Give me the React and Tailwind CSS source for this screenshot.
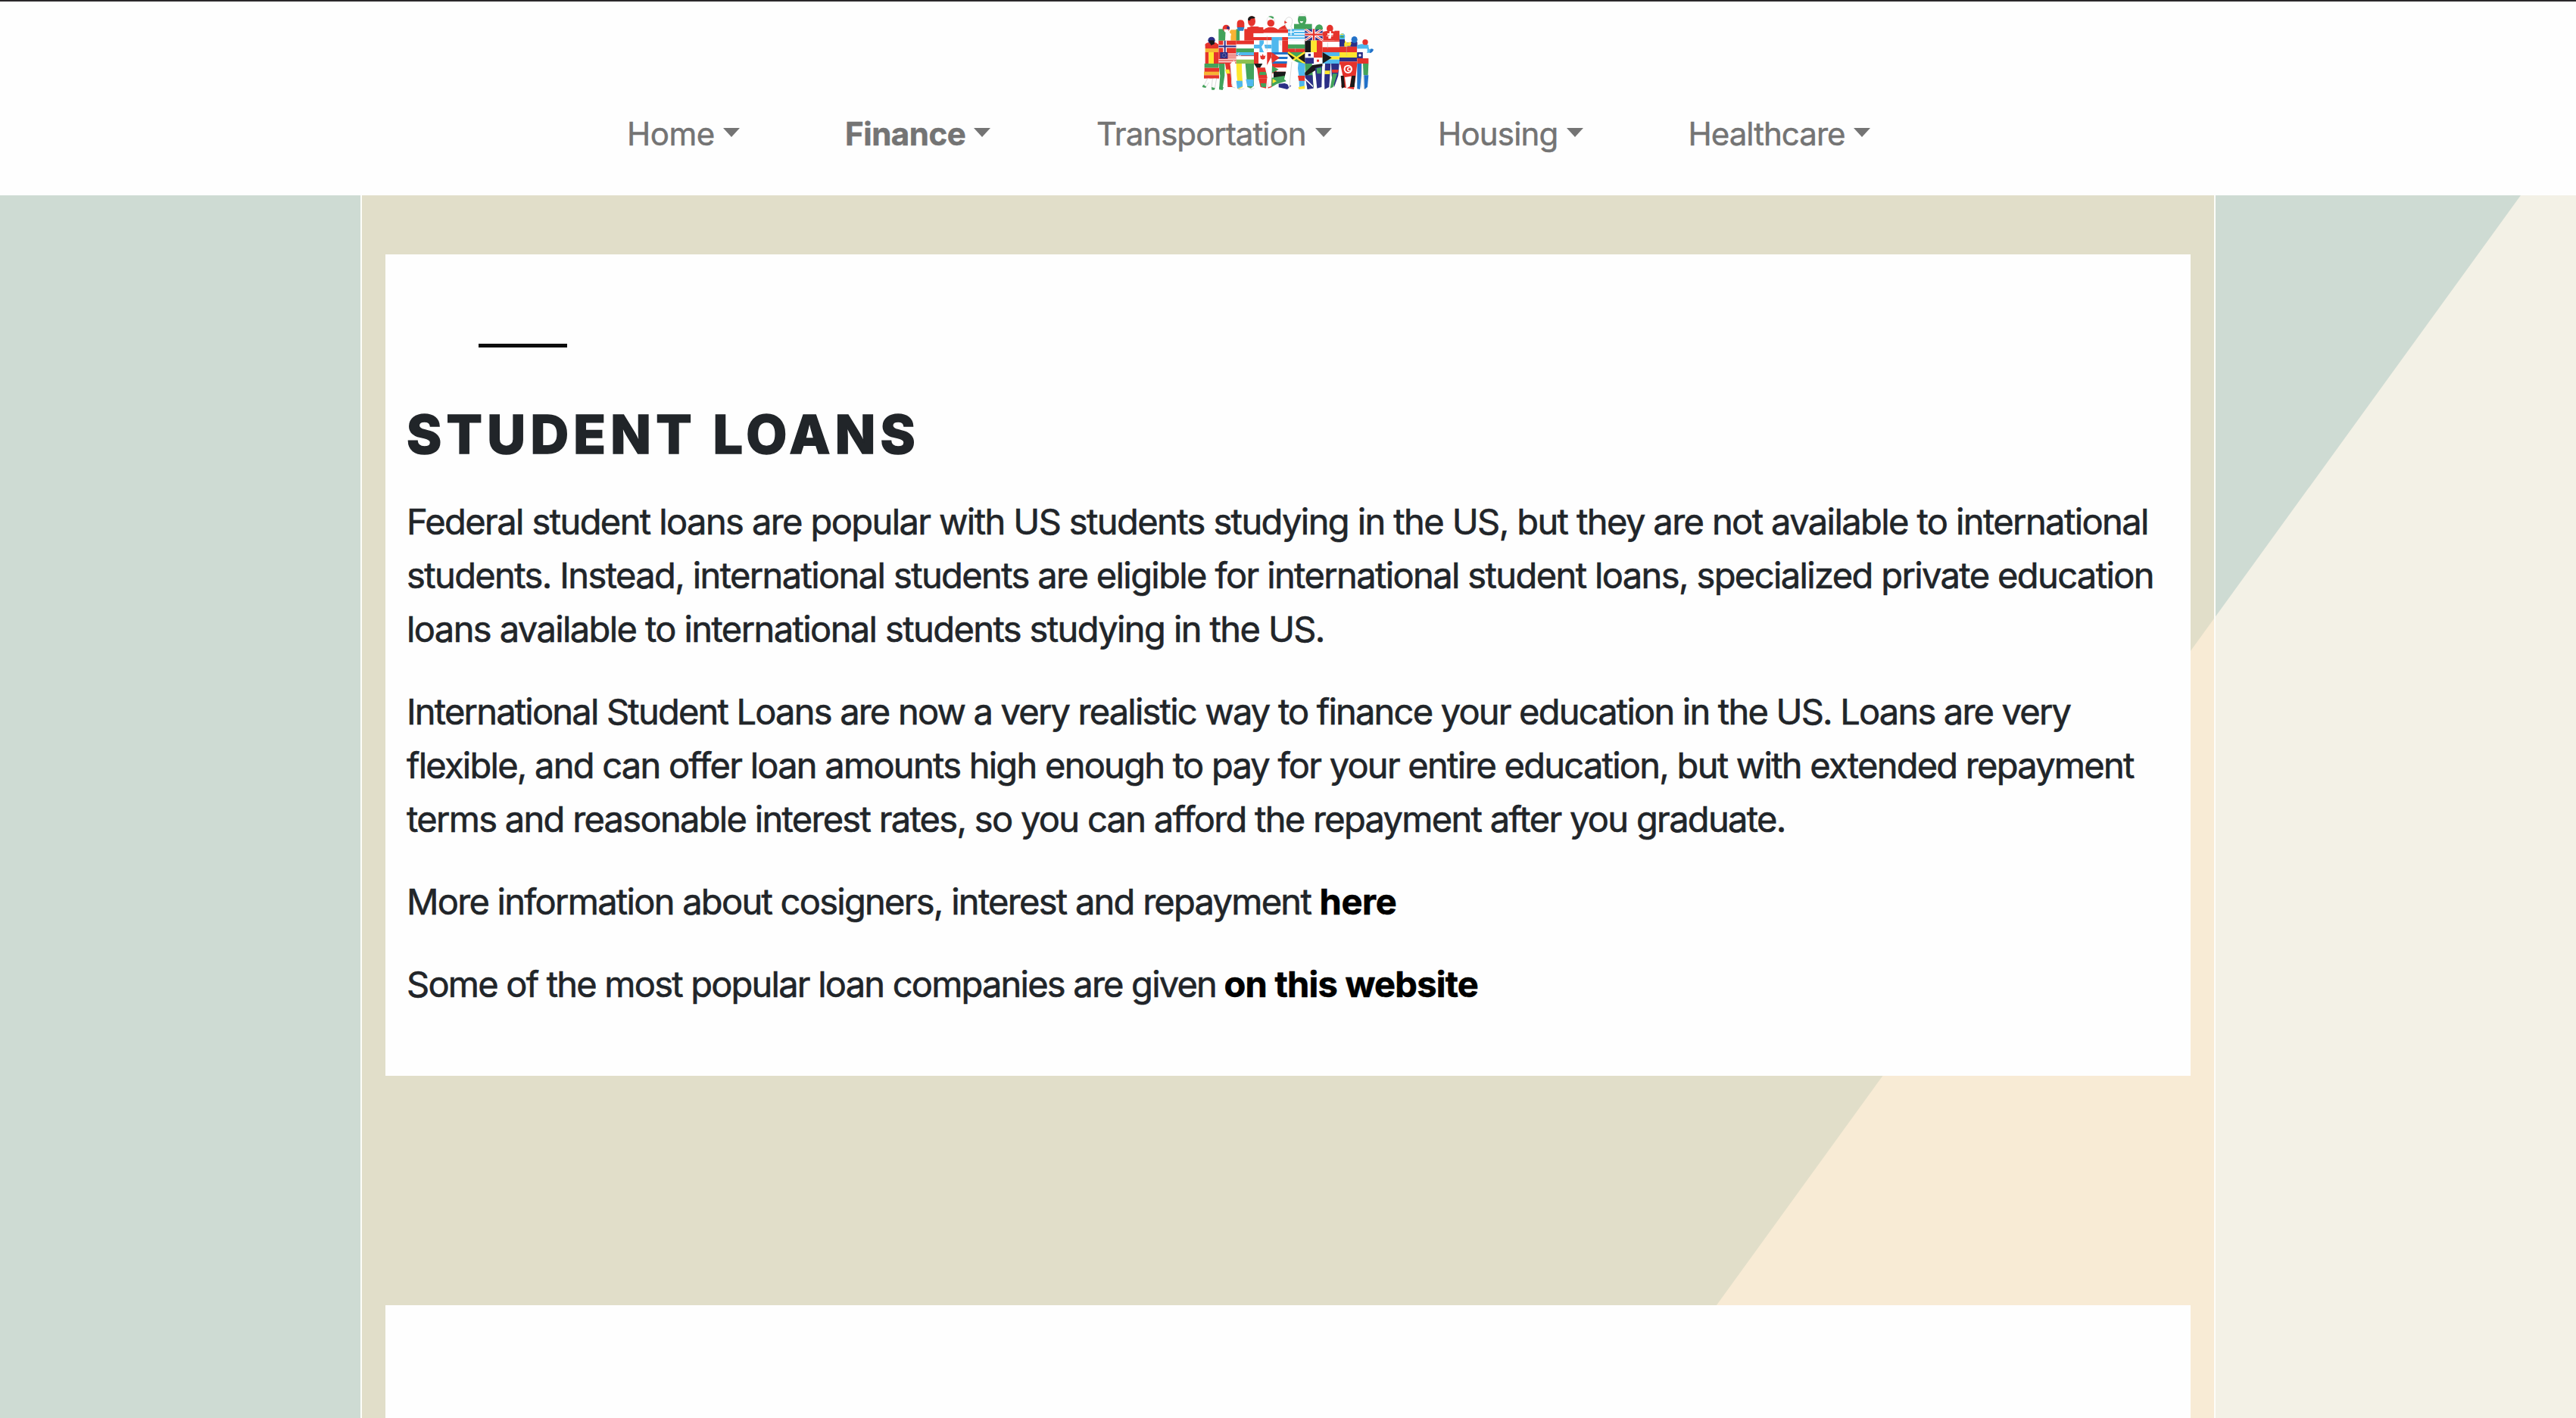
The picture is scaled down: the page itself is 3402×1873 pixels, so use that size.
const navItems = [
  { label: "Home", box: "w-[148.5px] mr-[139.5px]", text: "tracking-[-0.5px]" },
  { label: "Finance", box: "w-[192px] mr-[140px]", text: "font-bold tracking-[-0.45px]" },
  { label: "Transportation", box: "w-[311px] mr-[140px]", text: "tracking-[-0.95px]" },
  { label: "Housing", box: "w-[191.5px] mr-[139px]", text: "tracking-[-0.8px]" },
  { label: "Healthcare", box: "w-[240.5px]", text: "tracking-[-0.95px]" },
];

const R = "#e5332c";
const G = "#43a35b";
const N = "#2b2f86";
const Y = "#fde62e";
const O = "#f7b334";
const W = "#ffffff";
const S = "#4fb8ee";
const K = "#1a1a1a";

// Flag pieces: [x, y, width, height, colour]
const pieces = [
  [95, 175, 52, 17, R], [95, 191, 52, 17, O], [95, 207, 14, 45, R], [109, 207, 20, 45, Y], [129, 207, 19, 45, R],
  [92, 252, 56, 17, G], [92, 269, 58, 16, R], [90, 284, 60, 14, O], [90, 298, 60, 13, R],
  [148, 115, 26, 46, G], [174, 110, 22, 50, W], [196, 118, 24, 43, O],
  [148, 161, 70, 46, R], [166, 161, 14, 46, W], [148, 178, 70, 12, W], [170, 161, 6, 46, N], [148, 181, 70, 6, N],
  [148, 207, 70, 45, R], [184, 212, 34, 4, W], [184, 220, 34, 4, W], [184, 228, 34, 4, W], [148, 235, 70, 4, W], [148, 243, 70, 4, W], [154, 207, 30, 25, N],
  [218, 115, 14, 46, G], [232, 115, 20, 46, W], [250, 115, 38, 46, R],
  [218, 161, 70, 15, R], [218, 176, 70, 16, W], [218, 192, 70, 15, G],
  [218, 207, 70, 15, S], [218, 220, 70, 3, R], [218, 223, 70, 12, W], [218, 236, 70, 16, "#8cc152"],
  [262, 108, 63, 23, R], [286, 117, 137, 14, R], [286, 131, 137, 16, W], [286, 147, 137, 13, R],
  [288, 160, 70, 47, W], [310, 160, 17, 47, S], [288, 177, 70, 15, S],
  [358, 147, 42, 60, S], [386, 160, 15, 47, W], [400, 160, 23, 47, R],
  [288, 207, 18, 45, R], [306, 207, 34, 45, W], [340, 207, 18, 45, R],
  [358, 207, 65, 9, "#2271c8"], [358, 216, 65, 9, W], [358, 225, 65, 9, "#2271c8"], [358, 234, 65, 9, W], [358, 243, 65, 9, "#2271c8"],
  [423, 115, 67, 45, S], [423, 121, 67, 5, W], [423, 132, 67, 5, W], [423, 143, 67, 5, W], [423, 154, 67, 5, W], [423, 115, 24, 25, S], [433, 115, 4, 25, W], [423, 125, 24, 4, W],
  [447, 95, 71, 20, G], [423, 160, 67, 16, W], [423, 176, 67, 17, G], [423, 193, 67, 14, R],
  [423, 207, 67, 45, G],
  [490, 115, 70, 45, N],
  [490, 160, 24, 47, K], [514, 160, 23, 47, Y], [537, 160, 23, 47, R],
  [490, 207, 35, 22, W], [525, 207, 35, 22, R], [490, 229, 35, 23, N], [525, 229, 35, 23, W], [503, 213, 10, 10, N], [537, 236, 9, 9, R],
  [562, 125, 50, 36, R], [583, 127, 10, 26, W], [575, 135, 26, 9, W], [607, 122, 20, 40, R],
  [560, 161, 67, 26, W], [560, 187, 67, 20, R], [560, 161, 67, 4, R],
  [560, 207, 67, 16, S], [560, 223, 67, 13, Y], [560, 236, 67, 16, S],
  [627, 155, 21, 30, N], [646, 170, 12, 15, Y], [658, 168, 39, 17, N], [673, 165, 24, 20, N],
  [627, 185, 70, 22, R], [627, 207, 70, 21, Y], [627, 228, 70, 16, N], [627, 244, 70, 12, R],
  [697, 178, 45, 14, S], [697, 192, 50, 16, W], [697, 207, 22, 24, N], [719, 207, 23, 24, W], [697, 231, 45, 21, R],
];

// Leg shapes: [points, colour]
const legs = [
  ["104,311 112,311 100,345 88,345", W], ["128,311 138,311 130,352 120,352", W],
  ["148,252 172,252 172,300 164,350 150,354 154,300", G],
  ["174,252 194,252 200,340 204,345 184,345 182,300", R], ["174,275 190,275 194,292 178,292", Y],
  ["194,252 218,252 214,345 202,340", W],
  ["218,252 240,252 244,345 226,354 220,300", Y], ["218,320 242,320 244,342 222,352", S],
  ["240,252 254,252 254,340 244,345", W],
  ["254,252 288,252 288,340 276,350 262,345", G], ["256,314 287,314 286,342 262,342", S],
  ["288,252 322,252 306,280", K], ["300,268 332,268 342,310 306,310", R], ["312,285 335,285 338,297 308,297", G],
  ["306,310 340,310 336,350 314,345", R], ["314,330 336,330 336,345 318,345", G],
  ["340,250 357,250 359,345 344,350", R],
  ["358,252 423,252 412,290 360,290", R], ["372,268 420,268 414,284 378,284", W], ["366,284 416,284 408,316 366,316", K],
  ["358,260 386,275 358,290", G],
  ["358,308 410,300 416,322 380,332 358,345", G], ["362,312 378,322 362,330", Y], ["386,332 410,330 436,340 420,354 386,346", N],
  ["458,245 490,252 488,345 468,350 466,300", S], ["462,300 490,300 490,320 466,320", R], ["464,345 490,340 490,352 466,354", Y],
  ["490,252 518,252 524,345 500,354 492,300", G], ["490,298 520,298 524,350 500,354", N],
  ["490,308 522,340 522,346 490,316", W],
  ["520,258 560,252 560,262 500,298 490,298 490,288", K],
  ["530,270 558,262 556,345 538,350", N], ["536,270 556,268 554,292 538,292", G],
  ["566,252 592,252 586,345 568,354", N], ["568,280 590,280 588,294 568,294", Y],
  ["594,252 626,252 622,300 606,345 596,300", N], ["596,276 624,276 620,288 598,288", R], ["600,292 618,292 602,345 590,350", G],
  ["630,252 697,252 692,300 684,354 634,345 640,300", R], ["632,300 644,300 648,345 636,350", K], ["676,300 690,300 686,345 668,345", K],
  ["697,252 714,252 714,300 708,354 697,352", "#2271c8"], ["720,252 742,252 740,298 722,298", G], ["724,298 742,298 738,345 726,354", "#2271c8"],
];

function CrowdLogo() {
  return (
    <svg viewBox="3 0 840 390" className="h-[130px] w-[280px]" role="img" aria-label="People in flag colours">
      <g>
        {pieces.map(([x, y, w, h, c], i) => (
          <rect key={i} x={x} y={y} width={w} height={h} fill={c} />
        ))}
      </g>
      {/* union flag and saltires */}
      <path d="M490 115l70 45M560 115l-70 45" stroke={W} strokeWidth="9" />
      <path d="M490 115l70 45M560 115l-70 45" stroke={R} strokeWidth="3" />
      <path d="M525 115v45M490 137h70" stroke={W} strokeWidth="13" />
      <path d="M525 115v45M490 137h70" stroke={R} strokeWidth="7" />
      <path d="M423 207l33 22-33 23zM490 207l-33 22 33 23z" fill={K} />
      <path d="M423 207l67 45M490 207l-67 45" stroke={Y} strokeWidth="7" />
      <path d="M358 207l32 22-32 23z" fill={R} />
      <path d="M560 207l36 22-36 23z" fill={K} />
      <path d="M323 214l4 8 7-2-3 13-8 3v6-6l-8-3-3-13 7 2z" fill={R} />
      <path d="M230 210a6 6 0 1 0 6 8" stroke={W} strokeWidth="3" fill="none" />
      {legs.map(([p, c], i) => (
        <polygon key={i} points={p} fill={c} />
      ))}
      {/* gaps between the figures */}
      <path d="M423 215l25 30-2 15-8 45-10 45-12-30-2-30zM436 235l28 14-4 40-14 16zM318 185l10-15 6 30-8 5zM338 262l18-35 4 30-4 85-12 4zM197 250l12-10 6 12-2 90-14-10zM560 252l10 0-4 90-8 4z" fill={W} />
      <path d="M648 306l26-4-6 40-14 8zM420 262l6 0-8 60-10-8z" fill={W} />
      <path d="M174 116l18-2 6 22-8 24-12-12zM384 116l28-12 12 12h-40z" fill={W} />
      {/* heads and shoulders */}
      <path d="M95 176q4-8 16-8h20q12 0 16 12l-5 12H97z" fill={R} />
      <circle cx="120" cy="160" r="14" fill={N} />
      <path d="M109 160h21l2 14-14 6z" fill={K} />
      <path d="M148 160l12-26 8-10 8-6-2 42z" fill={G} />
      <circle cx="178" cy="112" r="14" fill={R} />
      <path d="M168 116h20l-2 14-14-3z" fill={W} />
      <path d="M182 103l10 5-2 9-10-3z" fill={N} />
      <circle cx="199" cy="127" r="7" fill={O} />
      <path d="M221 92q1-13 14-13t15 13v16h-29z" fill={R} />
      <path d="M221 108h29l-4 14h-20z" fill="#2c80c8" />
      <path d="M262 114q4-8 15-9h26q16 4 23 12v14h-64z" fill={R} />
      <ellipse cx="279" cy="84" rx="15" ry="20" fill={R} />
      <path d="M264 80q0-15 15-16 12 0 14 8l-17 2-4 8z" fill={K} />
      <path d="M326 119q6-8 20-11h18q16 4 22 12z" fill={R} />
      <ellipse cx="355" cy="83" rx="16" ry="20" fill={W} stroke="#bbb" strokeWidth="1" />
      <path d="M345 66q10-5 22 2l-3 7-10-6z" fill={G} />
      <circle cx="355" cy="92" r="14" fill={R} />
      <path d="M384 116q14-12 22-14l8-6 8 20z" fill={R} />
      <path d="M412 102q-4-30 13-34 16 0 15 18-2 14-6 18l6 12h-20z" fill={W} stroke="#bbb" strokeWidth="1.5" />
      <path d="M409 82l11 7-11 5z" fill={R} />
      <path d="M447 114q4-12 18-16l6-6h16l8 7q18 2 24 16z" fill={G} />
      <ellipse cx="479" cy="78" rx="17" ry="22" fill={G} />
      <path d="M463 64q4-9 16-9t16 9z" fill={W} stroke="#bbb" strokeWidth="1" />
      <path d="M470 83l8 2 6-2-4 8h-7z" fill={W} />
      <path d="M529 117q4-21 19-20 14 2 13 20z" fill={G} />
      <path d="M560 130q8-8 20-8h16q12 2 18 10v10h-54z" fill={R} />
      <ellipse cx="589" cy="113" rx="13" ry="15" fill={R} />
      <path d="M587 124h7v8h8v7h-8v9h-7v-9h-8v-7h8z" fill={W} />
      <path d="M627 142q4-10 12-10 9 1 10 12l-2 12h-20z" fill={S} />
      <path d="M628 138q8-9 18 0z" fill={Y} />
      <path d="M630 142h14v7h-14z" fill={G} />
      <path d="M648 160l10 10 12-4 4 6-4 10h-22z" fill={Y} />
      <ellipse cx="686" cy="157" rx="12" ry="13" fill="#2271c8" />
      <path d="M697 182q6-6 16-7h24l8 20 10-2 5 5-8 10-16 2-3-6h-36z" fill={S} />
      <circle cx="729" cy="167" r="11" fill={R} />
      <path d="M750 195q8-4 12 2-4 12-16 13z" fill="#2271c8" />
      <path d="M697 193h40v15h-40z" fill={W} />
      <rect x="697" y="207" width="22" height="24" fill={N} />
      <circle cx="708" cy="219" r="5" fill={W} />
      {/* crescent on the lower right skirt */}
      <circle cx="661" cy="274" r="17" fill={W} />
      <circle cx="661" cy="274" r="11" fill={R} />
      <circle cx="665" cy="274" r="8" fill={W} />
      <circle cx="667" cy="274" r="5" fill={R} />
      <circle cx="170" cy="219" r="7" fill="none" stroke={W} strokeWidth="2" strokeDasharray="2 3" />
      {/* thin contours */}
      <g fill="none" stroke="#b5b5b5" strokeWidth="1.5">
        <path d="M104 311l-17 34 10 2 12-20M124 311l-4 43h12l8-43M196 270l6 75 12 3M228 345l2 10 20-4M268 345l8 10 14-6M438 245l-6 60-4 45M340 142v60M388 150l6 30M452 190v14M580 168v24M655 175v46M716 252l-4 95M722 300l2 52 12 2" />
      </g>
      <path d="M87 335l12 8-2 5-14-3zM120 345l14 4-3 7h-10zM150 344l18 2-4 11-14-2z" fill={G} />
    </svg>
  );
}

const paragraphs = [
  [
    ["Federal student loans are popular with US students studying in the US, but they are not available to international", "tracking-[-1.59px]"],
    ["students. Instead, international students are eligible for international student loans, specialized private education", "tracking-[-1.61px]"],
    ["loans available to international students studying in the US.", "tracking-[-1.59px]"],
  ],
  [
    ["International Student Loans are now a very realistic way to finance your education in the US. Loans are very", "tracking-[-1.79px]"],
    ["flexible, and can offer loan amounts high enough to pay for your entire education, but with extended repayment", "tracking-[-1.74px]"],
    ["terms and reasonable interest rates, so you can afford the repayment after you graduate.", "tracking-[-1.69px]"],
  ],
];

export default function App() {
  return (
    <div className="flex h-[1873px] w-full flex-col overflow-hidden bg-white font-['Inter',sans-serif]">
      <header className="h-[258px] shrink-0 border-t-2 border-[#2a272a] bg-[#fefefe]">
        <div className="flex h-[143px] justify-center">
          <div className="-mt-[2px]">
            <CrowdLogo />
          </div>
        </div>
        <nav className="flex pl-[828px] text-[42px] leading-[64px] text-[#747474] [-webkit-text-stroke:0.5px_#747474]">
          {navItems.map((item) => (
            <a key={item.label} className={`flex shrink-0 justify-between whitespace-nowrap ${item.box}`}>
              <span className={item.text}>{item.label}</span>
              <span className="mt-[24px] h-0 w-0 border-x-[11.7px] border-t-[12px] border-x-transparent border-t-[#747474]" />
            </a>
          ))}
        </nav>
      </header>

      <main className="relative flex flex-1 justify-center bg-[#cedbd3]">
        {/* diagonal cream area of the page background */}
        <div className="absolute inset-0 bg-[#f3f1e6] [clip-path:polygon(3329px_0,100%_0,100%_100%,2159px_100%)]" />
        <div className="relative flex w-[2450px] flex-col border-x-2 border-[#fdfdf9] bg-[#fee4bb]/40 bg-clip-padding px-[31px] pt-[78px]">
          <section className="h-[1085px] shrink-0 bg-[#fefefe] pl-[28px] pt-[118px] text-[47px] leading-[71px] text-[#212529]">
            <div className="ml-[95px] h-[5px] w-[117px] bg-[#0d0d0d]" />
            <h1 className="mt-[73px] text-[70px] font-extrabold leading-[84px] tracking-[6.3px] [-webkit-text-stroke:1.5px_#212529]">
              STUDENT LOANS
            </h1>
            <div className="mt-[37px] flex flex-col gap-[38px] whitespace-nowrap [-webkit-text-stroke:0.6px_currentColor]">
              {paragraphs.map((lines, i) => (
                <p key={i}>
                  {lines.map(([text, tracking]) => (
                    <span key={text} className={`block ${tracking}`}>{text}</span>
                  ))}
                </p>
              ))}
              <p className="tracking-[-1.72px]">
                More information about cosigners, interest and repayment{" "}
                <a className="font-bold tracking-[-0.4px] text-black">here</a>
              </p>
              <p className="tracking-[-1.78px]">
                Some of the most popular loan companies are given{" "}
                <a className="-ml-px font-bold tracking-[-0.75px] text-black">on this website</a>
              </p>
            </div>
          </section>
          <section className="mt-[303px] flex-1 bg-[#fefefe]" />
        </div>
      </main>
    </div>
  );
}
